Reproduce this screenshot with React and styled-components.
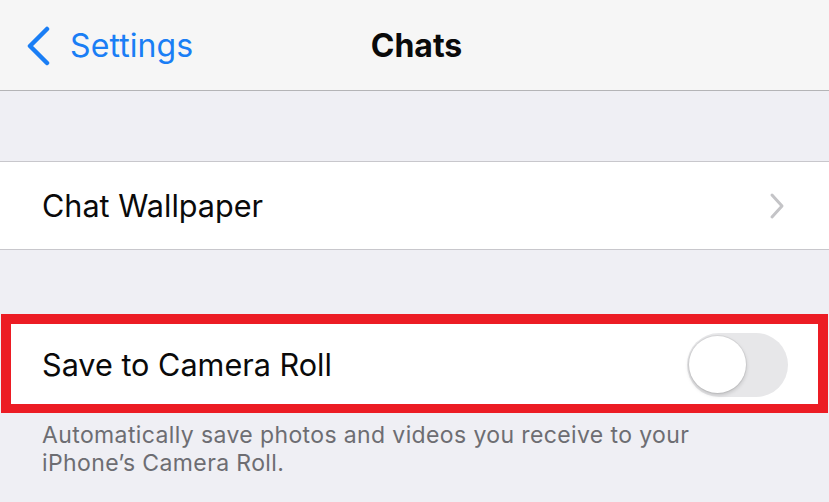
import React from "react";
import styled, { createGlobalStyle } from "styled-components";

const Global = createGlobalStyle`
  *, *::before, *::after { box-sizing: border-box; }
  html, body { margin: 0; padding: 0; background: #efeff4; }
  body { font-family: Inter, "Noto Sans", sans-serif; -webkit-font-smoothing: antialiased; }
`;

const Page = styled.div`
  width: 829px;
  height: 502px;
  background: #efeff4;
  overflow: hidden;
  display: flex;
  flex-direction: column;
`;

const NavBar = styled.header`
  height: 91px;
  flex: none;
  background: #f6f6f6;
  border-bottom: 1px solid #b4b4b6;
  display: grid;
  grid-template-columns: 1fr auto 1fr;
  align-items: center;
`;

const BackButton = styled.div`
  display: flex;
  align-items: center;
  gap: 18px;
  padding-left: 26px;
  padding-top: 1px;
  color: #1a7ef5;
  font-size: 32px;
  letter-spacing: 0.1px;
`;

const Title = styled.h1`
  margin: 0;
  padding: 1px 0 0 4px;
  font-size: 32px;
  font-weight: 700;
  color: #0a0a0a;
  letter-spacing: 0;
`;

const Spacer = styled.div`
  flex: none;
  height: ${(p) => p.h}px;
`;

const Cell = styled.div`
  flex: none;
  background: #fff;
  height: ${(p) => p.h}px;
  display: flex;
  align-items: center;
  justify-content: space-between;
  padding: 0 42px;
  ${(p) =>
    p.highlight
      ? `border: 10px solid #ec1c24; border-bottom-width: 9px; margin: 0 1px; padding: 0 30px 0 31px;`
      : `border-top: 1px solid #c8c7cc; border-bottom: 1px solid #c8c7cc;`}
`;

const Label = styled.span`
  font-size: 30.6px;
  color: #0a0a0a;
  letter-spacing: 0;
`;

const Toggle = styled.div`
  width: 101px;
  height: 64px;
  border-radius: 32px;
  background: #e7e7e9;
  position: relative;
  margin-top: 1px;
`;

const Knob = styled.div`
  position: absolute;
  left: 2px;
  top: 3px;
  width: 57px;
  height: 57px;
  border-radius: 50%;
  background: #fff;
  box-shadow: 0 2px 4px rgba(0, 0, 0, 0.18), 0 0 0 1px rgba(0, 0, 0, 0.06);
`;

const Footer = styled.p`
  margin: 0;
  padding: 8px 42px 0;
  font-size: 23px;
  line-height: 28px;
  color: #6d6d72;
  letter-spacing: 0.38px;
`;

const BackChevron = () => (
  <svg width="26" height="40" viewBox="0 0 26 40">
    <path d="M21 3 L4 20 L21 37" fill="none" stroke="#1a7ef5" strokeWidth="4.5" strokeLinecap="round" strokeLinejoin="round" />
  </svg>
);

const Disclosure = () => (
  <svg width="16" height="28" viewBox="0 0 16 28" style={{ marginRight: 2 }}>
    <path d="M3 3 L13 14 L3 25" fill="none" stroke="#c4c4c7" strokeWidth="3" strokeLinecap="round" strokeLinejoin="round" />
  </svg>
);

export default function App() {
  return (
    <Page>
      <Global />
      <NavBar>
        <BackButton>
          <BackChevron />
          <span>Settings</span>
        </BackButton>
        <Title>Chats</Title>
        <div />
      </NavBar>
      <Spacer h={70} />
      <Cell h={89}>
        <Label>Chat Wallpaper</Label>
        <Disclosure />
      </Cell>
      <Spacer h={64} />
      <Cell h={99} highlight>
        <Label>Save to Camera Roll</Label>
        <Toggle>
          <Knob />
        </Toggle>
      </Cell>
      <Footer>
        Automatically save photos and videos you receive to your
        <br />
        iPhone’s Camera Roll.
      </Footer>
    </Page>
  );
}
